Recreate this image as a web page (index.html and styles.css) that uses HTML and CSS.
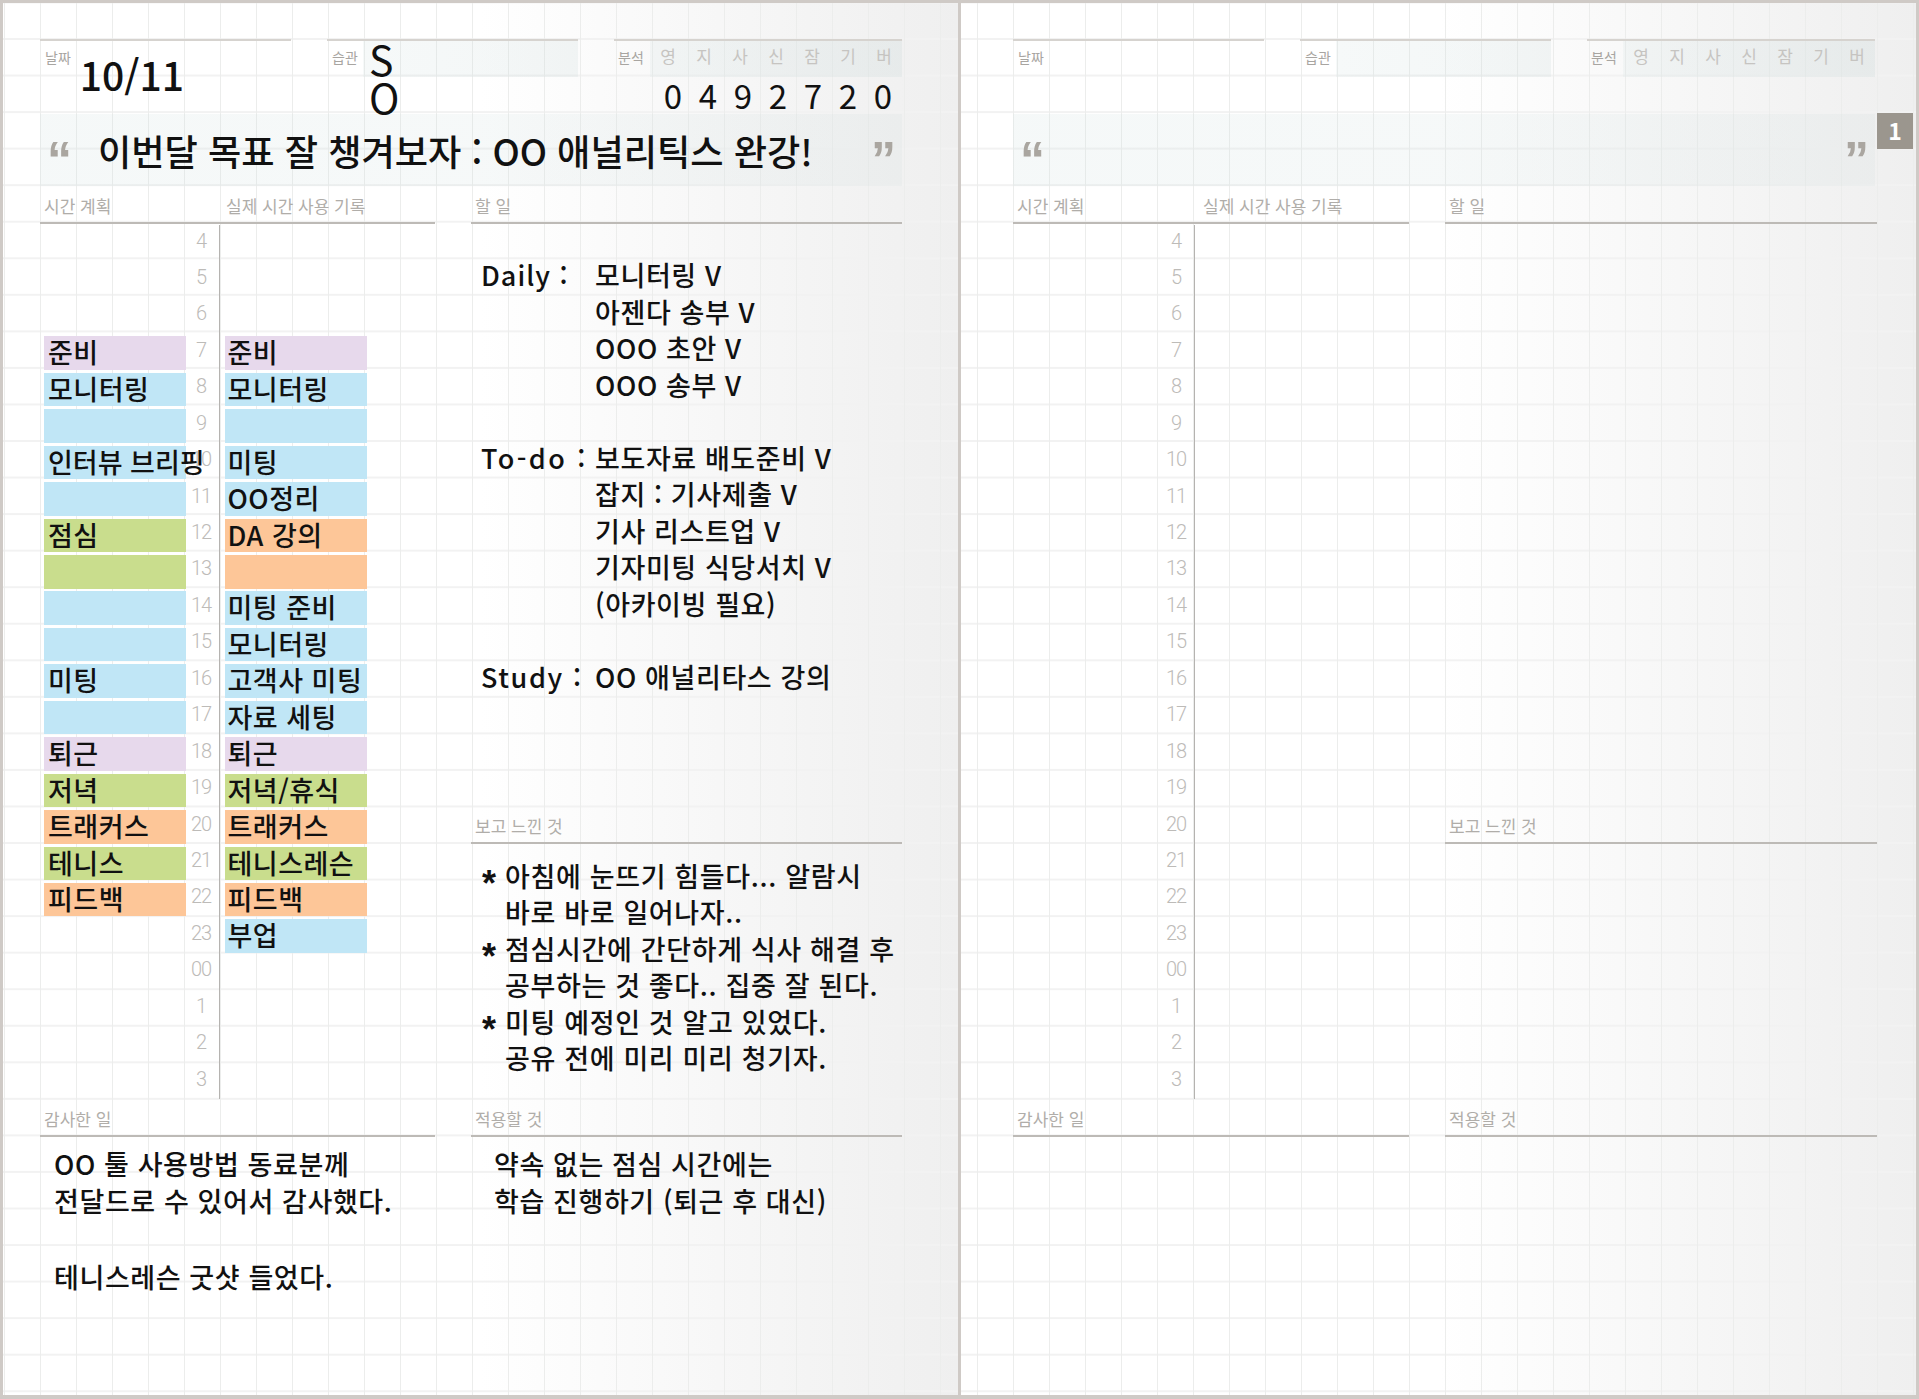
FILE: index.html
```html
<!DOCTYPE html>
<html lang="ko">
<head>
    <meta charset="UTF-8">
    <title>플래너</title>
    <link rel="stylesheet" href="styles.css">
</head>
<body>
    <div class="spread">
        <div class="page page-left">
            <div class="head">
                <div class="head-col date-col">
                    <span class="tiny">날짜</span>
                    <span class="date-val">10/11</span>
                </div>
                <div class="head-col habit-col">
                    <span class="tiny">습관</span>
                    <div class="habit-box">
                        <div class="habit-top">S</div>
                        <div class="habit-bottom">O</div>
                    </div>
                </div>
                <div class="head-col ana-col">
                    <div class="ana-top">
                        <span class="tiny ana-label">분석</span>
                        <div class="days"><span>영</span><span>지</span><span>사</span><span>신</span><span>잠</span><span>기</span><span>버</span></div>
                    </div>
                    <div class="ana-nums"><span>0</span><span>4</span><span>9</span><span>2</span><span>7</span><span>2</span><span>0</span></div>
                </div>
            </div>
            <div class="quote">
                <span class="q-mark">“</span>
                <span class="q-text">이번달 목표 잘 챙겨보자 : OO 애널리틱스 완강!</span>
                <span class="q-mark q-end">”</span>
            </div>
            <div class="body">
                <div class="col-a">
                    <div class="sec-head"><span class="first">시간 계획</span><span>실제 시간 사용 기록</span></div>
                    <div class="schedule">
                        <div class="row"><div class="plan"></div><div class="hour">4</div><div class="real"></div></div>
                        <div class="row"><div class="plan"></div><div class="hour">5</div><div class="real"></div></div>
                        <div class="row"><div class="plan"></div><div class="hour">6</div><div class="real"></div></div>
                        <div class="row"><div class="plan"><div class="block purple">준비</div></div><div class="hour">7</div><div class="real"><div class="block purple">준비</div></div></div>
                        <div class="row"><div class="plan"><div class="block blue">모니터링</div></div><div class="hour">8</div><div class="real"><div class="block blue">모니터링</div></div></div>
                        <div class="row"><div class="plan"><div class="block blue"></div></div><div class="hour">9</div><div class="real"><div class="block blue"></div></div></div>
                        <div class="row"><div class="plan"><div class="block blue tight">인터뷰 브리핑</div></div><div class="hour">10</div><div class="real"><div class="block blue">미팅</div></div></div>
                        <div class="row"><div class="plan"><div class="block blue"></div></div><div class="hour">11</div><div class="real"><div class="block blue">OO정리</div></div></div>
                        <div class="row"><div class="plan"><div class="block green">점심</div></div><div class="hour">12</div><div class="real"><div class="block orange">DA 강의</div></div></div>
                        <div class="row"><div class="plan"><div class="block green"></div></div><div class="hour">13</div><div class="real"><div class="block orange"></div></div></div>
                        <div class="row"><div class="plan"><div class="block blue"></div></div><div class="hour">14</div><div class="real"><div class="block blue">미팅 준비</div></div></div>
                        <div class="row"><div class="plan"><div class="block blue"></div></div><div class="hour">15</div><div class="real"><div class="block blue">모니터링</div></div></div>
                        <div class="row"><div class="plan"><div class="block blue">미팅</div></div><div class="hour">16</div><div class="real"><div class="block blue">고객사 미팅</div></div></div>
                        <div class="row"><div class="plan"><div class="block blue"></div></div><div class="hour">17</div><div class="real"><div class="block blue">자료 세팅</div></div></div>
                        <div class="row"><div class="plan"><div class="block purple">퇴근</div></div><div class="hour">18</div><div class="real"><div class="block purple">퇴근</div></div></div>
                        <div class="row"><div class="plan"><div class="block green">저녁</div></div><div class="hour">19</div><div class="real"><div class="block green">저녁/휴식</div></div></div>
                        <div class="row"><div class="plan"><div class="block orange">트래커스</div></div><div class="hour">20</div><div class="real"><div class="block orange">트래커스</div></div></div>
                        <div class="row"><div class="plan"><div class="block green">테니스</div></div><div class="hour">21</div><div class="real"><div class="block green">테니스레슨</div></div></div>
                        <div class="row"><div class="plan"><div class="block orange">피드백</div></div><div class="hour">22</div><div class="real"><div class="block orange">피드백</div></div></div>
                        <div class="row"><div class="plan"></div><div class="hour">23</div><div class="real"><div class="block blue">부업</div></div></div>
                        <div class="row"><div class="plan"></div><div class="hour">00</div><div class="real"></div></div>
                        <div class="row"><div class="plan"></div><div class="hour">1</div><div class="real"></div></div>
                        <div class="row"><div class="plan"></div><div class="hour">2</div><div class="real"></div></div>
                        <div class="row"><div class="plan"></div><div class="hour">3</div><div class="real"></div></div>
                    </div>
                    <div class="sec-head"><span>감사한 일</span></div>
                    <div class="note">
                        <p>OO 툴 사용방법 동료분께</p>
                        <p>전달드로 수 있어서 감사했다.</p>
                        <p>&nbsp;</p>
                        <p>테니스레슨 굿샷 들었다.</p>
                    </div>
                </div>
                <div class="col-b">
                    <div class="sec-head"><span>할 일</span></div>
                    <div class="todo">
                        <div class="todo-group">
                            <div class="todo-label">Daily :</div>
                            <div>
                                <p>모니터링 V</p>
                                <p>아젠다 송부 V</p>
                                <p>OOO 초안 V</p>
                                <p>OOO 송부 V</p>
                            </div>
                        </div>
                        <div class="todo-group">
                            <div class="todo-label label-wide">To-do :</div>
                            <div>
                                <p>보도자료 배도준비 V</p>
                                <p>잡지 : 기사제출 V</p>
                                <p>기사 리스트업 V</p>
                                <p>기자미팅 식당서치 V</p>
                                <p>(아카이빙 필요)</p>
                            </div>
                        </div>
                        <div class="todo-group">
                            <div class="todo-label label-mid">Study :</div>
                            <div>
                                <p>OO 애널리타스 강의</p>
                            </div>
                        </div>
                    </div>
                    <div class="sec-head"><span>보고 느낀 것</span></div>
                    <div class="review">
                        <div class="review-item"><span class="star">*</span><div><p>아침에 눈뜨기 힘들다... 알람시</p><p>바로 바로 일어나자..</p></div></div>
                        <div class="review-item"><span class="star">*</span><div><p>점심시간에 간단하게 식사 해결 후</p><p>공부하는 것 좋다.. 집중 잘 된다.</p></div></div>
                        <div class="review-item"><span class="star">*</span><div><p>미팅 예정인 것 알고 있었다.</p><p>공유 전에 미리 미리 청기자.</p></div></div>
                    </div>
                    <div class="sec-head"><span>적용할 것</span></div>
                    <div class="note note-b">
                        <p>약속 없는 점심 시간에는</p>
                        <p>학습 진행하기 (퇴근 후 대신)</p>
                    </div>
                </div>
            </div>
        </div>
        <div class="divider"></div>
        <div class="page page-right">
            <div class="tab">1</div>
            <div class="head">
                <div class="head-col date-col">
                    <span class="tiny">날짜</span>
                </div>
                <div class="head-col habit-col">
                    <span class="tiny">습관</span>
                    <div class="habit-box">
                        <div class="habit-top"></div>
                    </div>
                </div>
                <div class="head-col ana-col">
                    <div class="ana-top">
                        <span class="tiny ana-label">분석</span>
                        <div class="days"><span>영</span><span>지</span><span>사</span><span>신</span><span>잠</span><span>기</span><span>버</span></div>
                    </div>
                </div>
            </div>
            <div class="quote">
                <span class="q-mark">“</span>
                <span class="q-mark q-end">”</span>
            </div>
            <div class="body">
                <div class="col-a">
                    <div class="sec-head"><span class="first">시간 계획</span><span>실제 시간 사용 기록</span></div>
                    <div class="schedule">
                        <div class="row"><div class="plan"></div><div class="hour">4</div><div class="real"></div></div>
                        <div class="row"><div class="plan"></div><div class="hour">5</div><div class="real"></div></div>
                        <div class="row"><div class="plan"></div><div class="hour">6</div><div class="real"></div></div>
                        <div class="row"><div class="plan"></div><div class="hour">7</div><div class="real"></div></div>
                        <div class="row"><div class="plan"></div><div class="hour">8</div><div class="real"></div></div>
                        <div class="row"><div class="plan"></div><div class="hour">9</div><div class="real"></div></div>
                        <div class="row"><div class="plan"></div><div class="hour">10</div><div class="real"></div></div>
                        <div class="row"><div class="plan"></div><div class="hour">11</div><div class="real"></div></div>
                        <div class="row"><div class="plan"></div><div class="hour">12</div><div class="real"></div></div>
                        <div class="row"><div class="plan"></div><div class="hour">13</div><div class="real"></div></div>
                        <div class="row"><div class="plan"></div><div class="hour">14</div><div class="real"></div></div>
                        <div class="row"><div class="plan"></div><div class="hour">15</div><div class="real"></div></div>
                        <div class="row"><div class="plan"></div><div class="hour">16</div><div class="real"></div></div>
                        <div class="row"><div class="plan"></div><div class="hour">17</div><div class="real"></div></div>
                        <div class="row"><div class="plan"></div><div class="hour">18</div><div class="real"></div></div>
                        <div class="row"><div class="plan"></div><div class="hour">19</div><div class="real"></div></div>
                        <div class="row"><div class="plan"></div><div class="hour">20</div><div class="real"></div></div>
                        <div class="row"><div class="plan"></div><div class="hour">21</div><div class="real"></div></div>
                        <div class="row"><div class="plan"></div><div class="hour">22</div><div class="real"></div></div>
                        <div class="row"><div class="plan"></div><div class="hour">23</div><div class="real"></div></div>
                        <div class="row"><div class="plan"></div><div class="hour">00</div><div class="real"></div></div>
                        <div class="row"><div class="plan"></div><div class="hour">1</div><div class="real"></div></div>
                        <div class="row"><div class="plan"></div><div class="hour">2</div><div class="real"></div></div>
                        <div class="row"><div class="plan"></div><div class="hour">3</div><div class="real"></div></div>
                    </div>
                    <div class="sec-head"><span>감사한 일</span></div>
                </div>
                <div class="col-b">
                    <div class="sec-head"><span>할 일</span></div>
                    <div class="todo"></div>
                    <div class="sec-head"><span>보고 느낀 것</span></div>
                    <div class="review"></div>
                    <div class="sec-head"><span>적용할 것</span></div>
                </div>
            </div>
        </div>
    </div>
</body>
</html>
```

FILE: styles.css
```css
*{
    margin: 0;
    padding: 0;
    box-sizing: border-box;
}
html,body{
    height: 100%;
}
body{
    background: #cfcac6;
    font-family: "Noto Sans CJK KR", "Noto Sans", sans-serif;
    font-weight: 500;
    color: #111;
    overflow: hidden;
}
.spread{
    display: flex;
    height: 1399px;
    padding: 3px 3px 4px 3px;
}
.divider{
    width: 3px;
    flex: none;
}
.page{
    position: relative;
    width: 955px;
    flex: none;
    padding-top: 35.5px;
    background-color: #fff;
    background-image:
        linear-gradient(to right, #ecedec 1px, transparent 1px),
        linear-gradient(to bottom, #f2f2f2 2px, transparent 2px),
        linear-gradient(to right, #fff 50%, #efefef 100%);
    background-size: 36px 100%, 100% 36.55px, 100% 100%;
    background-position: 1px 0, 0 35px, 0 0;
}
.page-left{
    padding-left: 37px;
}
.page-right{
    padding-left: 52px;
    background-position: 16px 0, 0 35px, 0 0;
}
.tab{
    position: absolute;
    left: 916px;
    top: 110px;
    width: 36px;
    height: 36px;
    background: #9b968e;
    color: #fff;
    font-size: 23px;
    font-weight: 700;
    line-height: 34px;
    text-align: center;
}

/* top row */
.head{
    display: flex;
    gap: 36px;
    height: 75px;
}
.head-col{
    width: 251px;
    border-top: 2px solid #d6d3cf;
    display: flex;
    align-items: flex-start;
}
.ana-col{
    width: 288px;
    flex-direction: column;
}
.tiny{
    font-size: 14px;
    font-weight: 400;
    line-height: 32px;
    color: #a8a5a1;
    flex: none;
}
.date-col{
    padding-left: 5px;
}
.date-val{
    font-size: 39px;
    line-height: 46px;
    margin: 10px 0 0 9px;
}
.habit-col{
    padding-left: 5px;
}
.habit-col .tiny{
    width: 31px;
}
.habit-box{
    flex: 1;
    font-weight: 400;
}
.habit-top{
    height: 36px;
    padding-left: 6px;
    font-size: 41px;
    line-height: 34px;
    background: linear-gradient(to right, rgba(210,225,225,.2), rgba(200,215,215,.22));
}
.habit-bottom{
    padding-left: 6px;
    font-size: 41px;
    line-height: 39px;
}
.ana-top{
    display: flex;
    width: 100%;
    height: 36px;
}
.ana-label{
    width: 36px;
    padding-left: 4px;
}
.days{
    flex: 1;
    display: grid;
    grid-template-columns: repeat(7, 36px);
    background: linear-gradient(to right, rgba(210,225,225,.2), rgba(200,215,215,.25));
    color: #c6c4c1;
    font-size: 17px;
    font-weight: 400;
    line-height: 30px;
    text-align: center;
}
.ana-nums{
    display: grid;
    grid-template-columns: repeat(7, 35px);
    margin-left: 41.5px;
    font-size: 33px;
    font-weight: 400;
    line-height: 37px;
    text-align: center;
}

/* quote band */
.quote{
    display: flex;
    justify-content: space-between;
    width: 862px;
    height: 72px;
    background: linear-gradient(to right, rgba(210,225,225,.22), rgba(200,215,215,.15));
}
.q-mark{
    font-family: "Liberation Sans", sans-serif;
    font-size: 50px;
    font-weight: 700;
    line-height: 72px;
    color: #aaa6a0;
    padding: 10px 6px 0 7px;
}
.q-text{
    flex: 1;
    padding-left: 20px;
    font-size: 36.2px;
    line-height: 72px;
}

/* lower sections */
.body{
    display: flex;
    gap: 36px;
}
.col-a{
    width: 395px;
}
.col-b{
    width: 431px;
}
.page-right .col-a{
    width: 396px;
}
.page-right .col-b{
    width: 432px;
}
.sec-head{
    display: flex;
    height: 38px;
    padding: 8px 0 0 4px;
    border-bottom: 2px solid #bdbab6;
    font-size: 17px;
    font-weight: 400;
    line-height: 24px;
    color: #b0ada9;
}
.sec-head .first{
    width: 182px;
}
.page-right .sec-head .first{
    width: 186px;
}
.schedule{
    height: 875px;
    padding-top: 1px;
}
.row{
    display: grid;
    grid-template-columns: 146px 33px 1fr;
    height: 36.45px;
    font-size: 27px;
    line-height: 32px;
    letter-spacing: .5px;
}
.page-right .row{
    grid-template-columns: 148px 33px 1fr;
}
.plan{
    padding: 2.6px 0 0 4px;
}
.real{
    padding: 2.6px 0 0 5px;
    border-left: 1px solid #b5b3b0;
}
.block{
    position: relative;
    width: 142px;
    height: 33.5px;
    padding-left: 4px;
    white-space: nowrap;
}
.tight{
    letter-spacing: 0;
}
.real .block{
    padding-left: 2.5px;
}
.hour{
    padding-right: 3px;
    font-family: Roboto, sans-serif;
    font-weight: 300;
    font-size: 20px;
    letter-spacing: -1px;
    line-height: 33px;
    text-align: center;
    color: #bdbbb8;
}
.purple{
    background: #e7d9ec;
}
.blue{
    background: #c0e6f6;
}
.green{
    background: #c9dd8d;
}
.orange{
    background: #fdc698;
}
.todo{
    height: 582px;
    padding: 33.5px 0 0 10px;
    font-size: 27px;
    line-height: 36.5px;
    letter-spacing: .6px;
}
.todo-group{
    display: flex;
    margin-bottom: 36.5px;
}
.todo-label{
    width: 114px;
    flex: none;
    letter-spacing: 1px;
    white-space: nowrap;
}
.label-wide{
    letter-spacing: 2.4px;
}
.label-mid{
    letter-spacing: 1.6px;
}
.review{
    height: 255px;
    padding: 14.5px 0 0 11px;
    font-size: 27px;
    line-height: 36.45px;
    letter-spacing: .65px;
}
.review-item{
    display: flex;
}
.star{
    width: 23px;
    flex: none;
    font-family: "Liberation Sans", sans-serif;
    font-size: 36px;
    font-weight: 700;
    line-height: 52px;
}
.note{
    padding: 8px 0 0 14px;
    font-size: 27px;
    line-height: 37.7px;
    letter-spacing: .6px;
}
.note-b{
    padding-left: 23px;
}
```
